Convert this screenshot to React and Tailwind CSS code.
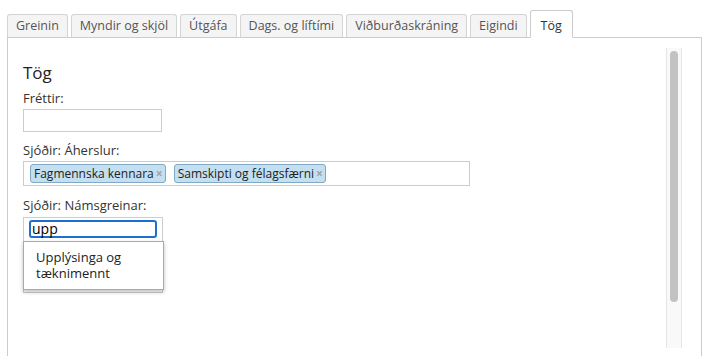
import React from "react";

const tabs = ["Greinin", "Myndir og skjöl", "Útgáfa", "Dags. og líftími", "Viðburðaskráning", "Eigindi", "Tög"];

function Tag({ children }) {
  return (
    <span className="inline-flex items-center h-[19px] rounded-[3px] border border-[#7fa9c6] bg-[#c3dff0] pl-[3px] pr-[2px] text-[12px] leading-[17px] text-[#222]">
      {children}
      <span className="ml-[2px] text-[12px] leading-[17px] text-[#9aa4aa] font-bold">×</span>
    </span>
  );
}

export default function App() {
  return (
    <div className="w-[714px] h-[356px] overflow-hidden bg-white text-[#333] font-['Open_Sans',sans-serif]">
      <div className="pt-[10px] pl-[7px]">
        <div className="relative z-10 -mb-px flex items-end gap-[3px]">
          {tabs.map((t) => {
            const active = t === "Tög";
            return active ? (
              <div
                key={t}
                className="h-[28px] rounded-t-[3px] border border-[#cccccc] border-b-white bg-white px-[10px] pt-[6px] pb-[2px] text-[12.5px] leading-[18px] text-[#333]"
              >
                {t}
              </div>
            ) : (
              <div
                key={t}
                className="h-[24px] rounded-t-[3px] border border-[#d4d4d4] border-b-[#cccccc] bg-[#f4f4f4] px-[8px] pt-[2px] pb-[2px] text-[12.5px] leading-[18px] text-[#555]"
              >
                {t}
              </div>
            );
          })}
        </div>
        <div className="flex h-[330px] w-[695px] border border-b-0 border-[#cccccc]">
          <div className="flex-1 pl-[15px] pt-[25px]">
            <h2 className="text-[17px] leading-[20px] text-[#222] mb-[7px]">Tög</h2>
            <div className="text-[13px] leading-[17px] text-[#333] mb-[2px]">Fréttir:</div>
            <div className="h-[23px] w-[139px] border border-[#cccccc] bg-white"></div>

            <div className="mt-[10px] text-[13px] leading-[17px] text-[#333] mb-[2px]">Sjóðir: Áherslur:</div>
            <div className="flex h-[25px] w-[447px] items-center gap-[8px] border border-[#cccccc] bg-white pl-[6px]">
              <Tag>Fagmennska kennara</Tag>
              <Tag>Samskipti og félagsfærni</Tag>
            </div>

            <div className="mt-[11px] text-[13px] leading-[17px] text-[#333] mb-[3px]">Sjóðir: Námsgreinar:</div>
            <div className="relative h-[76px] w-[140px] border border-[#cccccc] bg-white pl-[5px] pt-[2px]">
              <div className="h-[18px] w-[128px] rounded-[3px] border-2 border-[#1f6fd1] pl-[1px] text-[14px] leading-[14px] text-black">
                upp
              </div>
              <div className="absolute left-[-1px] top-[23px] h-[49px] w-[141px] border border-[#a9a9a9] bg-white pl-[12px] pt-[8px] text-[13px] leading-[15.5px] text-[#222] shadow-[0_2px_4px_rgba(0,0,0,0.25)]">
                <div>Upplýsinga og</div>
                <div>tæknimennt</div>
              </div>
            </div>
          </div>
          <div className="mt-[10px] mr-[19px] h-[300px] w-[16px] border-x border-[#e6e6e6] bg-[#f9f9f9] px-[3px] pt-[3px]">
            <div className="h-[251px] w-[8px] rounded-full bg-[#c2c2c2]"></div>
          </div>
        </div>
      </div>
    </div>
  );
}
